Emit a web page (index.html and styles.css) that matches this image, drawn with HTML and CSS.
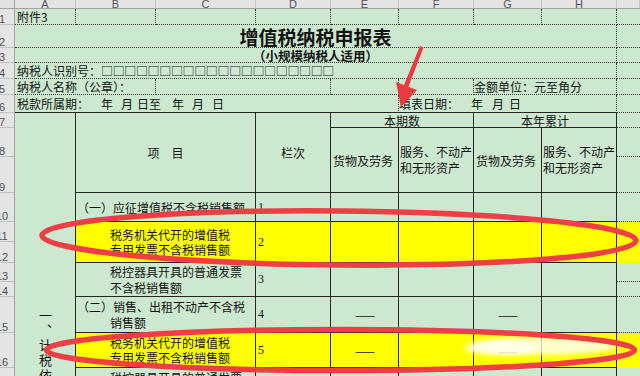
FILE: index.html
```html
<!DOCTYPE html>
<html lang="zh-CN">
<head>
<meta charset="utf-8">
<title>增值税纳税申报表</title>
<link rel="stylesheet" href="styles.css">
</head>
<body>
<div class="app">
  <div class="corner"></div>
  <div class="colheads">
    <div class="ch"><span>A</span></div>
    <div class="ch"><span>B</span></div>
    <div class="ch"><span>C</span></div>
    <div class="ch"><span>D</span></div>
    <div class="ch"><span>E</span></div>
    <div class="ch"><span>F</span></div>
    <div class="ch"><span>G</span></div>
    <div class="ch"><span>H</span></div>
    <div class="ch"><span></span></div>
  </div>
  <div class="rowheads">
    <div class="rh"><span>1</span></div>
    <div class="rh"><span>2</span></div>
    <div class="rh"><span>3</span></div>
    <div class="rh"><span>4</span></div>
    <div class="rh"><span>5</span></div>
    <div class="rh"><span>6</span></div>
    <div class="rh"><span>7</span></div>
    <div class="rh"><span>8</span></div>
    <div class="rh"><span>9</span></div>
    <div class="rh"><span>10</span></div>
    <div class="rh"><span>11</span></div>
    <div class="rh"><span>12</span></div>
    <div class="rh"><span>13</span></div>
    <div class="rh"><span>14</span></div>
    <div class="rh"><span>15</span></div>
    <div class="rh"><span>16</span></div>
    <div class="rh"><span>17</span></div>
  </div>
  <div class="sheet">
    <!-- row 1 -->
    <div class="c x1 y1 dot pl2">附件3</div>
    <div class="c x2 y1 dot"></div>
    <div class="c x3 y1 dot"></div>
    <div class="c x4 y1 dot"></div>
    <div class="c x5 y1 dot"></div>
    <div class="c x6 y1 dot"></div>
    <div class="c x7 y1 dot"></div>
    <div class="c x8 y1 dot"></div>
    <div class="c x9 y1 dotb"></div>
    <!-- row 2 -->
    <div class="c x1 w8 y2 dot ctr title">增值税纳税申报表</div>
    <div class="c x9 y2 dotb"></div>
    <!-- row 3 -->
    <div class="c x1 w8 y3 dot ctr sub">（小规模纳税人适用）</div>
    <div class="c x9 y3 dotb"></div>
    <!-- row 4 -->
    <div class="c x1 w8 y4 dot pl2">纳税人识别号：<span class="boxes">□□□□□□□□□□□□□□□□□□□□</span></div>
    <div class="c x9 y4 dotb"></div>
    <!-- row 5 -->
    <div class="c x1 w2 y5 dot pl2">纳税人名称（公章）：</div>
    <div class="c x3 w2 y5 dot"></div>
    <div class="c x5 y5 dot"></div>
    <div class="c x6 y5 dot"></div>
    <div class="c x7 w2 y5 dot">金额单位：元至角分</div>
    <div class="c x9 y5 dotb"></div>
    <!-- row 6 -->
    <div class="c x1 w5 y6 r6 pl2">税款所属期：<span class="g12">年</span><span class="g8">月</span><span class="g4">日至</span><span class="g11">年</span><span class="g8">月</span><span class="g8">日</span></div>
    <div class="c x6 w3 y6 r6">填表日期：<span class="g12">年</span><span class="g9">月</span><span class="g5">日</span></div>
    <div class="c x9 y6 dotb"></div>
    <!-- rows 7-9 header -->
    <div class="c x1 y7 h3 vr"></div>
    <div class="c x2 w2 y7 h3 t ctr">项　目</div>
    <div class="c x4 y7 h3 t ctr">栏次</div>
    <div class="c x5 w2 y7 t ctr">本期数</div>
    <div class="c x7 w2 y7 t ctr">本年累计</div>
    <div class="c x9 y7 dotb"></div>
    <div class="c x5 y8 h2 t pl2">货物及劳务</div>
    <div class="c x6 y8 h2 t col hl pl1"><span>服务、不动产</span><span>和无形资产</span></div>
    <div class="c x7 y8 h2 t pl2">货物及劳务</div>
    <div class="c x8 y8 h2 t col hl pl1"><span>服务、不动产</span><span>和无形资产</span></div>
    <div class="c x9 y8 dotb"></div>
    <div class="c x9 y9 dotb"></div>
    <!-- row 10 -->
    <div class="c x1 y10 h8 vr vert"><span>一、计税依据</span></div>
    <div class="c x2 w2 y10 t pl1">（一）应征增值税不含税销售额</div>
    <div class="c x4 y10 t num">1</div>
    <div class="c x5 y10 t"></div>
    <div class="c x6 y10 t"></div>
    <div class="c x7 y10 t"></div>
    <div class="c x8 y10 t"></div>
    <div class="c x9 y10 dotb"></div>
    <!-- rows 11-12 -->
    <div class="c x2 w2 y11 h2 t yel col ind"><span>税务机关代开的增值税</span><span>专用发票不含税销售额</span></div>
    <div class="c x4 y11 h2 t yel num">2</div>
    <div class="c x5 y11 h2 t yel"></div>
    <div class="c x6 y11 h2 t yel"></div>
    <div class="c x7 y11 h2 t yel"></div>
    <div class="c x8 y11 h2 t yel"></div>
    <div class="c x9 y11 h2 yel"></div>
    <!-- rows 13-14 -->
    <div class="c x2 w2 y13 h2 t col ind"><span>税控器具开具的普通发票</span><span>不含税销售额</span></div>
    <div class="c x4 y13 h2 t num">3</div>
    <div class="c x5 y13 h2 t"></div>
    <div class="c x6 y13 h2 t"></div>
    <div class="c x7 y13 h2 t"></div>
    <div class="c x8 y13 h2 t"></div>
    <div class="c x9 y13 dotb"></div>
    <div class="c x9 y14 dotb"></div>
    <!-- row 15 -->
    <div class="c x2 w2 y15 t col pl1"><span>（二）销售、出租不动产不含税</span><span class="ind2">销售额</span></div>
    <div class="c x4 y15 t num">4</div>
    <div class="c x5 y15 t ctr dash">——</div>
    <div class="c x6 y15 t"></div>
    <div class="c x7 y15 t ctr dash">——</div>
    <div class="c x8 y15 t"></div>
    <div class="c x9 y15 dotb"></div>
    <!-- row 16 -->
    <div class="c x2 w2 y16 t yel col ind"><span>税务机关代开的增值税</span><span>专用发票不含税销售额</span></div>
    <div class="c x4 y16 t yel num">5</div>
    <div class="c x5 y16 t yel ctr dash">——</div>
    <div class="c x6 y16 t yel"></div>
    <div class="c x7 y16 t yel ctr dash">——</div>
    <div class="c x8 y16 t yel"></div>
    <div class="c x9 y16 yel"></div>
    <!-- row 17 -->
    <div class="c x2 w2 y17 t col ind"><span>税控器具开具的普通发票</span><span>不含税销售额</span></div>
    <div class="c x4 y17 t num">6</div>
    <div class="c x5 y17 t"></div>
    <div class="c x6 y17 t"></div>
    <div class="c x7 y17 t"></div>
    <div class="c x8 y17 t"></div>
    <div class="c x9 y17 dotb"></div>
  </div>
  <svg class="marks" viewBox="0 0 640 376" width="640" height="376">
    <defs>
      <filter id="soft" x="-20%" y="-60%" width="140%" height="220%"><feGaussianBlur stdDeviation="2.5"/></filter>
    </defs>
    <ellipse cx="545" cy="346" rx="72" ry="9" fill="#ffffff" opacity="0.8" filter="url(#soft)"/>
    <ellipse cx="500" cy="348" rx="36" ry="7" fill="#fffff0" opacity="0.85" filter="url(#soft)"/>
    <ellipse cx="339" cy="238" rx="297" ry="27" transform="rotate(0.5 339 238)" fill="none" stroke="#ef3e45" stroke-width="5.5"/>
    <ellipse cx="340.5" cy="350" rx="294" ry="20.5" fill="none" stroke="#ef3e45" stroke-width="5.5"/>
    <path d="M420 46 L423.5 47.5 L407.5 89 L403 87.5 Z" fill="#ec3a40"/>
    <path d="M396 82 L417 90 L401 107 Z" fill="#ec3a40"/>
  </svg>
</div>
</body>
</html>
```

FILE: styles.css
```css
* { box-sizing: border-box; margin: 0; padding: 0; }
html, body { width: 640px; height: 376px; overflow: hidden; }
body {
  background: #cce8cf;
  font-family: "Noto Sans CJK SC", "Noto Sans", sans-serif;
  color: #141414;
}
.app {
  --cols: 61px 80px 100px 75px 68px 75px 68px 75px 23px;
  --rows: 16px 23px 15px 16px 16px 18px 15px 29px 36px 29px 20px 21px 19px 15px 36px 35px 35px;
  position: relative;
  display: grid;
  grid-template-columns: 15px 625px;
  grid-template-rows: 9px 367px;
  width: 640px;
  height: 376px;
  overflow: hidden;
}
.corner {
  background: #e2e2e2;
  border-right: 1px solid #a3a3a3;
  border-bottom: 1px solid #a3a3a3;
}
.colheads {
  display: grid;
  grid-template-columns: var(--cols);
  background: #e4e4e4;
  border-bottom: 1px solid #a3a3a3;
  overflow: hidden;
}
.ch {
  display: flex;
  align-items: flex-end;
  justify-content: center;
  border-right: 1px solid #c6c6c6;
  overflow: hidden;
}
.ch span {
  font: 11px/10px "Liberation Sans", sans-serif;
  color: #555;
  margin-bottom: -1px;
}
.rowheads {
  display: grid;
  grid-template-rows: var(--rows);
  background: #e4e4e4;
  border-right: 1px solid #a3a3a3;
  overflow: hidden;
}
.rh {
  display: flex;
  align-items: flex-end;
  border-bottom: 1px solid #c2c2c2;
  overflow: hidden;
}
.rh span {
  flex: none;
  width: 30px;
  margin-left: -13px;
  margin-bottom: -1px;
  text-align: center;
  font: 11px/11px "Liberation Sans", sans-serif;
  color: #4f4f4f;
}
.sheet {
  display: grid;
  grid-template-columns: var(--cols);
  grid-template-rows: var(--rows);
  overflow: hidden;
  font-size: 12px;
}
.c {
  display: flex;
  align-items: center;
  min-width: 0;
  white-space: nowrap;
  overflow: hidden;
  line-height: 15px;
}
.x1 { grid-column-start: 1; } .x2 { grid-column-start: 2; } .x3 { grid-column-start: 3; }
.x4 { grid-column-start: 4; } .x5 { grid-column-start: 5; } .x6 { grid-column-start: 6; }
.x7 { grid-column-start: 7; } .x8 { grid-column-start: 8; } .x9 { grid-column-start: 9; }
.w2 { grid-column-end: span 2; } .w3 { grid-column-end: span 3; }
.w5 { grid-column-end: span 5; } .w8 { grid-column-end: span 8; }
.y1 { grid-row-start: 1; } .y2 { grid-row-start: 2; } .y3 { grid-row-start: 3; }
.y4 { grid-row-start: 4; } .y5 { grid-row-start: 5; } .y6 { grid-row-start: 6; }
.y7 { grid-row-start: 7; } .y8 { grid-row-start: 8; } .y9 { grid-row-start: 9; }
.y10 { grid-row-start: 10; } .y11 { grid-row-start: 11; } .y13 { grid-row-start: 13; }
.y14 { grid-row-start: 14; } .y15 { grid-row-start: 15; } .y16 { grid-row-start: 16; }
.y17 { grid-row-start: 17; }
.h2 { grid-row-end: span 2; } .h3 { grid-row-end: span 3; } .h8 { grid-row-end: span 8; }

.dot { border-right: 1px dotted #3c3c3c; border-bottom: 1px dotted #3c3c3c; }
.dotb { border-bottom: 1px dotted #3c3c3c; }
.r6 { border-right: 1px dotted #3c3c3c; border-bottom: 1px solid #262626; }
.t { border-right: 1px solid #262626; border-bottom: 1px solid #262626; }
.vr { border-right: 1px solid #262626; }
.yel { background: #ffff00; }

.pl1 { padding-left: 1px; }
.pl2 { padding-left: 2px; }
.ctr { justify-content: center; }
.col { flex-direction: column; justify-content: center; align-items: flex-start; line-height: 15.5px; }
.hl { line-height: 16px; }
.ind { padding-left: 34px; }
.ind2 { padding-left: 33px; }
.num { padding-left: 2px; font-family: "Liberation Serif", serif; font-size: 12px; }
.dash { font-size: 12px; letter-spacing: -1px; }

.title { font-size: 19px; font-weight: 700; line-height: 21px; }
.sub { font-size: 12.5px; font-weight: 700; line-height: 14px; padding-top: 1px; }
.boxes { letter-spacing: -0.35px; }

.g4 { margin-left: 4px; } .g5 { margin-left: 5px; } .g8 { margin-left: 8px; }
.g9 { margin-left: 9px; } .g11 { margin-left: 11px; } .g12 { margin-left: 12px; }

.vert {
  align-items: flex-start;
  justify-content: center;
  padding-top: 116px;
}
.vert span {
  writing-mode: vertical-rl;
  font-size: 13px;
  letter-spacing: 2px;
  line-height: 14px;
}
.marks {
  position: absolute;
  left: 0;
  top: 0;
  pointer-events: none;
}
```
